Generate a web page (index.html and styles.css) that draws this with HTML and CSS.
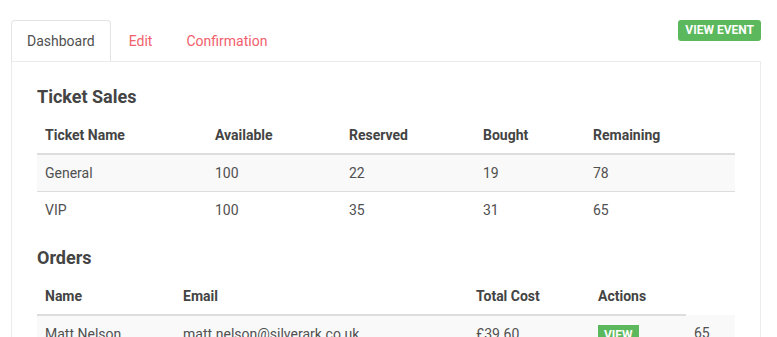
FILE: index.html
```html
<!DOCTYPE html>
<html lang="en">

<head>
    <meta charset="UTF-8">
    <meta name="viewport" content="width=device-width, initial-scale=1.0">
    <title>Event Dashboard</title>
    <link rel="stylesheet" href="styles.css">
</head>

<body>
    <div class="page">
        <div class="top-bar">
            <ul class="tabs">
                <li class="tab active"><a href="#">Dashboard</a></li>
                <li class="tab"><a href="#">Edit</a></li>
                <li class="tab"><a href="#">Confirmation</a></li>
            </ul>
            <a class="btn-event" href="#">View Event</a>
        </div>

        <div class="panel">
            <h3>Ticket Sales</h3>
            <table class="data-table sales">
                <thead>
                    <tr>
                        <th>Ticket Name</th>
                        <th>Available</th>
                        <th>Reserved</th>
                        <th>Bought</th>
                        <th>Remaining</th>
                    </tr>
                </thead>
                <tbody>
                    <tr>
                        <td>General</td>
                        <td>100</td>
                        <td>22</td>
                        <td>19</td>
                        <td>78</td>
                    </tr>
                    <tr>
                        <td>VIP</td>
                        <td>100</td>
                        <td>35</td>
                        <td>31</td>
                        <td>65</td>
                    </tr>
                </tbody>
            </table>

            <h3 class="orders-title">Orders</h3>
            <table class="data-table orders">
                <thead>
                    <tr>
                        <th>Name</th>
                        <th>Email</th>
                        <th>Total Cost</th>
                        <th>Actions</th>
                    </tr>
                </thead>
                <tbody>
                    <tr>
                        <td>Matt Nelson</td>
                        <td>matt.nelson@silverark.co.uk</td>
                        <td>£39.60</td>
                        <td><span class="label-view">View</span></td>
                        <td>65</td>
                    </tr>
                </tbody>
            </table>
        </div>
    </div>
</body>

</html>
```

FILE: styles.css
```css
body {
    margin: 0;
    font-family: Roboto, 'Liberation Sans', Arial, sans-serif;
    font-size: 14px;
    line-height: 20px;
    color: #505050;
    background-color: #fff;
}

.page {
    padding: 20px 16px 0 11px;
}

.top-bar {
    display: flex;
    justify-content: space-between;
    align-items: flex-start;
}

.tabs {
    list-style: none;
    margin: 0;
    padding: 0;
    display: flex;
}

.tab {
    margin-right: 2px;
}

.tab a {
    display: block;
    padding: 10px 15px;
    border: 1px solid transparent;
    border-bottom: none;
    border-radius: 4px 4px 0 0;
    color: #f2606c;
    text-decoration: none;
}

.tab.active a {
    color: #505050;
    border-color: #e3e3e3;
    background-color: #fff;
}

.btn-event {
    display: block;
    padding: 0 7px;
    line-height: 21px;
    font-size: 12px;
    font-weight: bold;
    text-transform: uppercase;
    color: #fff;
    background-color: #5cb85c;
    border-radius: 3px;
    text-decoration: none;
}

.panel {
    border: 1px solid #ececec;
    border-bottom: none;
    padding: 25px 25px 0 25px;
    height: 300px;
}

h3 {
    margin: 0 0 10px;
    font-size: 18px;
    line-height: 20px;
    font-weight: bold;
    color: #444;
}

.orders-title {
    margin-top: 20px;
}

.data-table {
    width: 100%;
    border-collapse: collapse;
    table-layout: fixed;
}

.data-table th,
.data-table td {
    padding: 8px;
    text-align: left;
    vertical-align: top;
    white-space: nowrap;
}

.data-table th {
    font-weight: bold;
    color: #444;
    border-bottom: 2px solid #ddd;
}

.data-table td {
    border-top: 1px solid #ddd;
}

.data-table tbody tr:first-child td {
    border-top: none;
}

.data-table tbody tr:nth-child(odd) {
    background-color: #f9f9f9;
}

.sales th:nth-child(1) { width: 154px; }
.sales th:nth-child(2) { width: 118px; }
.sales th:nth-child(3) { width: 118px; }
.sales th:nth-child(4) { width: 94px; }

.orders th:nth-child(1) { width: 122px; }
.orders th:nth-child(2) { width: 277px; }
.orders th:nth-child(3) { width: 106px; }
.orders th:nth-child(4) { width: 80px; }

.label-view {
    display: inline-block;
    margin-top: -2px;
    padding: 0 6px;
    line-height: 20px;
    font-size: 12px;
    font-weight: bold;
    text-transform: uppercase;
    color: #fff;
    background-color: #5cb85c;
}
```
